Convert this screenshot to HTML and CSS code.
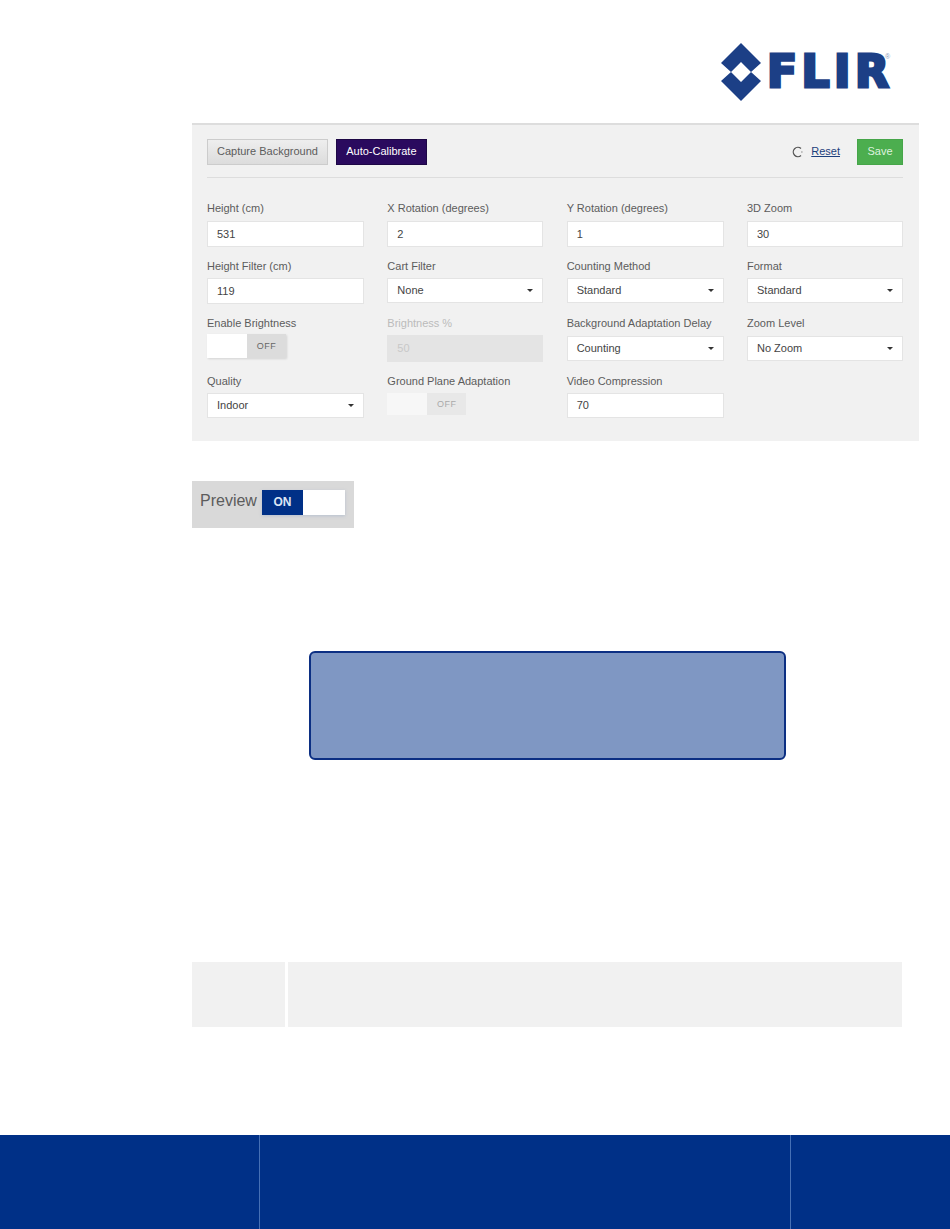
FILE: index.html
```html
<!DOCTYPE html>
<html lang="en">
<head>
    <meta charset="UTF-8">
    <title>Camera Settings</title>
    <link rel="stylesheet" href="styles.css">
</head>
<body>
    <header class="page-header">
        <div class="logo">
            <svg class="logo-mark" width="40" height="58" viewBox="0 0 40 58">
                <path d="M20 0L40 20L30 29L20 19L10 29L0 20Z"/>
                <path d="M20 58L40 38L30 29L20 39L10 29L0 38Z"/>
            </svg>
            <span class="logo-text">FLIR</span>
            <span class="logo-reg">&reg;</span>
        </div>
    </header>

    <section class="settings-panel">
        <div class="toolbar">
            <button class="btn btn-grey">Capture Background</button>
            <button class="btn btn-purple">Auto-Calibrate</button>
            <span class="toolbar-space"></span>
            <svg class="reset-icon" width="12" height="12" viewBox="0 0 12 12">
                <path d="M10 2.6A4.6 4.6 0 1 0 10 9.4" fill="none" stroke="#555" stroke-width="1.3"/>
                <path d="M10.4 5.6h1v1h-1z" fill="#555"/>
            </svg>
            <a class="reset-link" href="#">Reset</a>
            <button class="btn btn-green">Save</button>
        </div>

        <div class="settings-grid">
            <div class="field"><label>Height (cm)</label><div class="input">531</div></div>
            <div class="field"><label>X Rotation (degrees)</label><div class="input">2</div></div>
            <div class="field"><label>Y Rotation (degrees)</label><div class="input">1</div></div>
            <div class="field"><label>3D Zoom</label><div class="input">30</div></div>

            <div class="field"><label>Height Filter (cm)</label><div class="input">119</div></div>
            <div class="field"><label>Cart Filter</label><div class="input select">None</div></div>
            <div class="field"><label>Counting Method</label><div class="input select">Standard</div></div>
            <div class="field"><label>Format</label><div class="input select">Standard</div></div>

            <div class="field">
                <label>Enable Brightness</label>
                <div class="switch"><span class="switch-knob"></span><span class="switch-off">OFF</span></div>
            </div>
            <div class="field disabled"><label>Brightness %</label><div class="input">50</div></div>
            <div class="field"><label>Background Adaptation Delay</label><div class="input select">Counting</div></div>
            <div class="field"><label>Zoom Level</label><div class="input select">No Zoom</div></div>

            <div class="field"><label>Quality</label><div class="input select">Indoor</div></div>
            <div class="field">
                <label>Ground Plane Adaptation</label>
                <div class="switch switch-disabled"><span class="switch-knob"></span><span class="switch-off">OFF</span></div>
            </div>
            <div class="field"><label>Video Compression</label><div class="input select-size">70</div></div>
        </div>
    </section>

    <div class="preview-bar">
        <span class="preview-label">Preview</span>
        <div class="preview-switch"><span class="preview-on">ON</span><span class="preview-knob"></span></div>
    </div>

    <div class="callout"></div>

    <div class="note-table">
        <div class="note-cell note-icon"></div>
        <div class="note-cell note-text"></div>
    </div>

    <footer class="page-footer">
        <div class="footer-left"></div>
        <div class="footer-mid"></div>
        <div class="footer-right"></div>
    </footer>
</body>
</html>
```

FILE: styles.css
```css
html, body {
    margin: 0;
    padding: 0;
}
body {
    width: 950px;
    height: 1229px;
    overflow: hidden;
    display: flex;
    flex-direction: column;
    background-color: #fff;
    font-family: "Liberation Sans", Arial, sans-serif;
    font-size: 11px;
    color: #5c5c5c;
}
.page-header {
    height: 123px;
    padding-left: 721px;
}
.logo {
    position: relative;
    display: flex;
    align-items: flex-start;
    padding-top: 43px;
    color: #1c3f86;
}
.logo-mark {
    fill: #1c3f86;
    margin-right: 6px;
}
.logo-text {
    font-family: "DejaVu Sans", sans-serif;
    font-weight: bold;
    font-size: 44px;
    line-height: 58px;
    letter-spacing: 4.5px;
    -webkit-text-stroke: 3px #1c3f86;
}
.logo-reg {
    position: absolute;
    left: 164px;
    top: 53px;
    font-size: 7px;
    color: #8a9bbd;
}
.settings-panel {
    margin-left: 192px;
    width: 727px;
    height: 318px;
    box-sizing: border-box;
    padding: 14px 16px 0 15px;
    background-color: #f1f1f1;
    border-top: 2px solid #ddd;
}
.toolbar {
    display: flex;
    align-items: center;
    padding-bottom: 12px;
    border-bottom: 1px solid #ddd;
}
.toolbar-space {
    flex: 1;
}
.btn {
    height: 26px;
    padding: 0 9px 2px;
    font-family: inherit;
    font-size: 11px;
    box-sizing: border-box;
}
.btn-grey {
    background: linear-gradient(#eee, #dcdcdc);
    border: 1px solid #ccc;
    color: #5c5c5c;
}
.btn-purple {
    width: 91px;
    margin-left: 8px;
    background-color: #2a0a5e;
    border: 1px solid #1d0745;
    color: #fff;
}
.btn-green {
    width: 46px;
    padding: 0 0 2px;
    background-color: #4cae4f;
    border: 1px solid #46a549;
    color: #dff2df;
}
.reset-icon {
    margin-right: 8px;
}
.reset-link {
    margin: 0 17px 2px 0;
    color: #1d3f7c;
}
.settings-grid {
    display: grid;
    grid-template-columns: 157px 156px 157px 156px;
    grid-auto-rows: 57.5px;
    column-gap: 23.33px;
    padding-top: 23.9px;
}
.field label {
    display: block;
    height: 18.8px;
    padding-top: 0.2px;
    line-height: 13px;
}
.input {
    height: 26px;
    box-sizing: border-box;
    padding: 0 9px;
    line-height: 24px;
    background-color: #fff;
    border: 1px solid #e4e4e4;
    color: #444;
    position: relative;
}
.select,
.select-size {
    height: 25px;
    line-height: 23px;
}
.select {
    cursor: pointer;
}
.select::after {
    content: "";
    position: absolute;
    right: 9px;
    top: 10px;
    border-left: 3px solid transparent;
    border-right: 3px solid transparent;
    border-top: 3px solid #333;
}
.disabled label {
    color: #bbb;
}
.disabled .input {
    height: 27px;
    margin-top: -1px;
    background-color: #e4e4e4;
    border-color: #e4e4e4;
    color: #c8c8c8;
}
.switch {
    display: flex;
    width: 79px;
    height: 24px;
    margin-top: -2px;
    box-shadow: 1px 1px 2px rgba(0,0,0,0.12);
}
.switch-knob {
    width: 40px;
    background-color: #fff;
}
.switch-off {
    flex: 1;
    text-align: center;
    line-height: 24px;
    font-size: 9px;
    letter-spacing: 0.5px;
    background-color: #dcdcdc;
    color: #666;
}
.switch-disabled {
    height: 22px;
    margin-top: 0;
    box-shadow: none;
}
.switch-disabled .switch-knob {
    background-color: #f7f7f7;
}
.switch-disabled .switch-off {
    line-height: 22px;
    background-color: #e8e8e8;
    color: #aaa;
}
.preview-bar {
    margin: 40px 0 0 192px;
    width: 162px;
    height: 47px;
    box-sizing: border-box;
    padding-top: 9px;
    display: flex;
    align-items: flex-start;
    background-color: #d9d9d9;
}
.preview-label {
    margin-left: 8px;
    width: 62px;
    font-size: 16px;
    line-height: 22px;
    color: #5c5c5c;
}
.preview-switch {
    display: flex;
    width: 83px;
    height: 25px;
    box-shadow: 0 1px 3px rgba(120,150,190,0.35);
}
.preview-on {
    width: 41px;
    text-align: center;
    line-height: 25px;
    font-size: 12px;
    font-weight: bold;
    background-color: #003087;
    color: #dce6f5;
}
.preview-knob {
    flex: 1;
    background-color: #fff;
}
.callout {
    margin: 123px 0 0 309px;
    width: 477px;
    height: 109px;
    box-sizing: border-box;
    background-color: #7f97c3;
    border: 2px solid #0c2f83;
    border-radius: 6px;
}
.note-table {
    margin: 202px 0 0 192px;
    width: 710px;
    height: 65px;
    display: flex;
    gap: 3px;
}
.note-cell {
    background-color: #f1f1f1;
}
.note-icon {
    width: 93px;
}
.note-text {
    flex: 1;
}
.page-footer {
    margin-top: 108px;
    height: 94px;
    display: flex;
    background-color: #003087;
}
.footer-left {
    width: 259px;
    border-right: 1px solid #4670b5;
}
.footer-mid {
    width: 530px;
    border-right: 1px solid #4670b5;
}
```
